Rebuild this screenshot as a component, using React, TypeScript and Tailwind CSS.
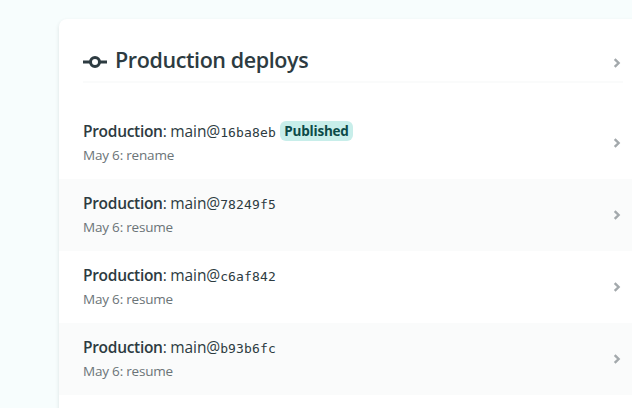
const deploys = [
  { hash: '16ba8eb', note: 'rename', published: true },
  { hash: '78249f5', note: 'resume', published: false },
  { hash: 'c6af842', note: 'resume', published: false },
  { hash: 'b93b6fc', note: 'resume', published: false },
];

function Chevron() {
  return (
    <svg width="8" height="10" viewBox="0 0 8 10" fill="none" stroke="#a3a9ac" strokeWidth="2.4">
      <path d="M1.7 1.2 L5.6 5 L1.7 8.8" />
    </svg>
  );
}

export default function App() {
  return (
    <main className="h-[408px] w-[632px] overflow-hidden bg-[#f7fdfd] pl-[59px] pt-[19px] font-['Open_Sans','Noto_Sans',sans-serif] text-[#2d3b41]">
      <section className="h-[420px] w-[600px] rounded-lg bg-white shadow-[0_2px_4px_rgba(14,30,37,0.12)]">
        <header className="ml-6 flex h-[64px] w-[540px] items-center border-b-2 border-[#fafbfb] pr-0.5 pt-6">
          <svg width="24" height="14" viewBox="0 0 24 14" fill="none" stroke="currentColor" strokeWidth="3">
            <circle cx="12" cy="7" r="4.5" />
            <path d="M0 7h7.5M16.5 7H24" />
          </svg>
          <h1 className="-mt-1 ml-2 grow text-[21.5px] font-semibold leading-7 tracking-[-0.4px]">Production deploys</h1>
          <div className="pt-0.5"><Chevron /></div>
        </header>
        <ul className="pt-6">
          {deploys.map((d) => (
            <li key={d.hash} className="flex h-[72px] items-center pl-6 pr-[38px] even:bg-[#fafbfb]">
              <div className="grow">
                <p className="flex h-6 items-center whitespace-pre text-[15.5px] tracking-[-0.1px]">
                  <span className="relative top-px tracking-[-0.3px]"><b className="font-semibold">Production</b>:</span>
                  <span className="relative top-px"> main@</span>
                  <code className="relative top-[1.5px] font-['DejaVu_Sans_Mono',monospace] text-[13px] tracking-[0.15px]">{d.hash}</code>
                  {d.published && <span className="ml-1 h-5 w-[73px] rounded-md bg-[#c8eeea] text-center text-[13.5px] font-bold leading-[21px] tracking-[-0.2px] text-[#0c4a48]">Published</span>}
                </p>
                <p className="h-6 text-[13.5px] leading-[25px] tracking-[-0.2px] text-[#6b7478]">May 6: {d.note}</p>
              </div>
              <Chevron />
            </li>
          ))}
        </ul>
      </section>
    </main>
  );
}
